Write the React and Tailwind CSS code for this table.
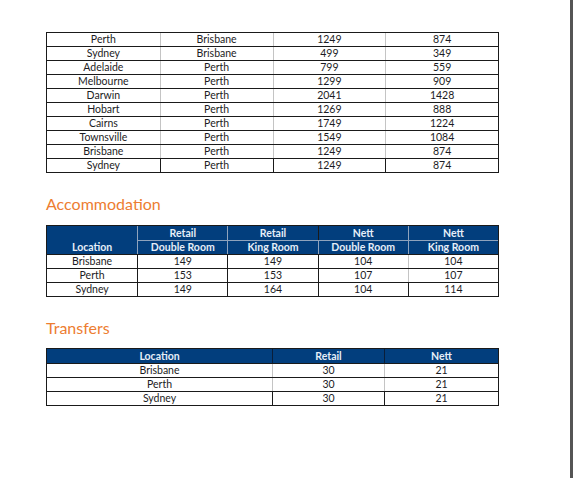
import React from "react";

const routes = [
  ["Perth", "Brisbane", "1249", "874"],
  ["Sydney", "Brisbane", "499", "349"],
  ["Adelaide", "Perth", "799", "559"],
  ["Melbourne", "Perth", "1299", "909"],
  ["Darwin", "Perth", "2041", "1428"],
  ["Hobart", "Perth", "1269", "888"],
  ["Cairns", "Perth", "1749", "1224"],
  ["Townsville", "Perth", "1549", "1084"],
  ["Brisbane", "Perth", "1249", "874"],
  ["Sydney", "Perth", "1249", "874"],
];

const rooms = [
  ["Brisbane", "149", "149", "104", "104"],
  ["Perth", "153", "153", "107", "107"],
  ["Sydney", "149", "164", "104", "114"],
];

const transfers = [
  ["Brisbane", "30", "21"],
  ["Perth", "30", "21"],
  ["Sydney", "30", "21"],
];

const font = { fontFamily: "Lato, 'Open Sans', sans-serif" };

const App = () => {
  return (
    <div className="flex w-[573px] h-[478px] bg-white overflow-hidden" style={font}>
      <div className="flex-1 pl-[46px] pt-[32px]">
        {/* Flights table */}
        <div className="w-[453px] border border-[#1a1a1a] text-[10.5px] text-[#1c1c24]">
          {routes.map((row, i) => {
            const last = i === routes.length - 1;
            return (
              <div
                key={i}
                className={`grid grid-cols-4 ${i === 0 ? "h-[13px]" : "h-[14px] border-t border-[#1a1a1a]"}`}
              >
                {row.map((cell, j) => (
                  <div
                    key={j}
                    className={`flex items-center justify-center leading-none ${
                      j === 0 ? "" : last ? "border-l border-[#1a1a1a]" : "border-l border-[#c4c4c4]"
                    }`}
                  >
                    {cell}
                  </div>
                ))}
              </div>
            );
          })}
        </div>

        {/* Accommodation */}
        <h2 className="mt-[21px] text-[16px] leading-[20px] text-[#ed7d31]">Accommodation</h2>
        <div className="mt-[11px] w-[453px] border border-[#1a1a1a] text-[10.5px] text-[#1c1c24]">
          <div className="grid grid-cols-5 bg-[#023e7d] text-[#e6eef8] font-bold">
            <div className="row-span-2 flex items-end justify-center pb-[2px] leading-none">Location</div>
            <div className="h-[14px] flex items-center justify-center border-l border-[#8fa3bd] leading-none">Retail</div>
            <div className="h-[14px] flex items-center justify-center border-l border-[#8fa3bd] leading-none">Retail</div>
            <div className="h-[14px] flex items-center justify-center border-l border-[#1a1a1a] leading-none">Nett</div>
            <div className="h-[14px] flex items-center justify-center border-l border-[#8fa3bd] leading-none">Nett</div>
            <div className="h-[14px] flex items-center justify-center border-l border-t border-[#8fa3bd] leading-none">Double Room</div>
            <div className="h-[14px] flex items-center justify-center border-l border-t border-[#8fa3bd] leading-none">King Room</div>
            <div className="h-[14px] flex items-center justify-center border-l border-t border-[#8fa3bd] leading-none">Double Room</div>
            <div className="h-[14px] flex items-center justify-center border-l border-t border-[#8fa3bd] leading-none">King Room</div>
          </div>
          {rooms.map((row, i) => {
            const last = i === rooms.length - 1;
            return (
              <div key={i} className="grid grid-cols-5 h-[14px] border-t border-[#1a1a1a]">
                {row.map((cell, j) => (
                  <div
                    key={j}
                    className={`flex items-center justify-center leading-none ${
                      j === 0 ? "" : j === 4 && !last ? "border-l border-[#c4c4c4]" : "border-l border-[#1a1a1a]"
                    }`}
                  >
                    {cell}
                  </div>
                ))}
              </div>
            );
          })}
        </div>

        {/* Transfers */}
        <h2 className="mt-[21px] text-[16px] leading-[20px] text-[#ed7d31]">Transfers</h2>
        <div className="mt-[10px] w-[453px] border border-[#1a1a1a] text-[10.5px] text-[#1c1c24]">
          <div className="grid grid-cols-[225px_112px_1fr] h-[14px] bg-[#023e7d] text-[#e6eef8] font-bold">
            <div className="flex items-center justify-center leading-none">Location</div>
            <div className="flex items-center justify-center border-l border-[#0a1e3a] leading-none">Retail</div>
            <div className="flex items-center justify-center border-l border-[#0a1e3a] leading-none">Nett</div>
          </div>
          {transfers.map((row, i) => {
            const last = i === transfers.length - 1;
            return (
              <div key={i} className="grid grid-cols-[225px_112px_1fr] h-[14px] border-t border-[#1a1a1a]">
                {row.map((cell, j) => (
                  <div
                    key={j}
                    className={`flex items-center justify-center leading-none ${
                      j === 0 ? "" : last ? "border-l border-[#1a1a1a]" : "border-l border-[#c4c4c4]"
                    }`}
                  >
                    {cell}
                  </div>
                ))}
              </div>
            );
          })}
        </div>
      </div>
      {/* viewer edge */}
      <div className="w-[3px] h-full bg-[#555]" />
    </div>
  );
};

export default App;
